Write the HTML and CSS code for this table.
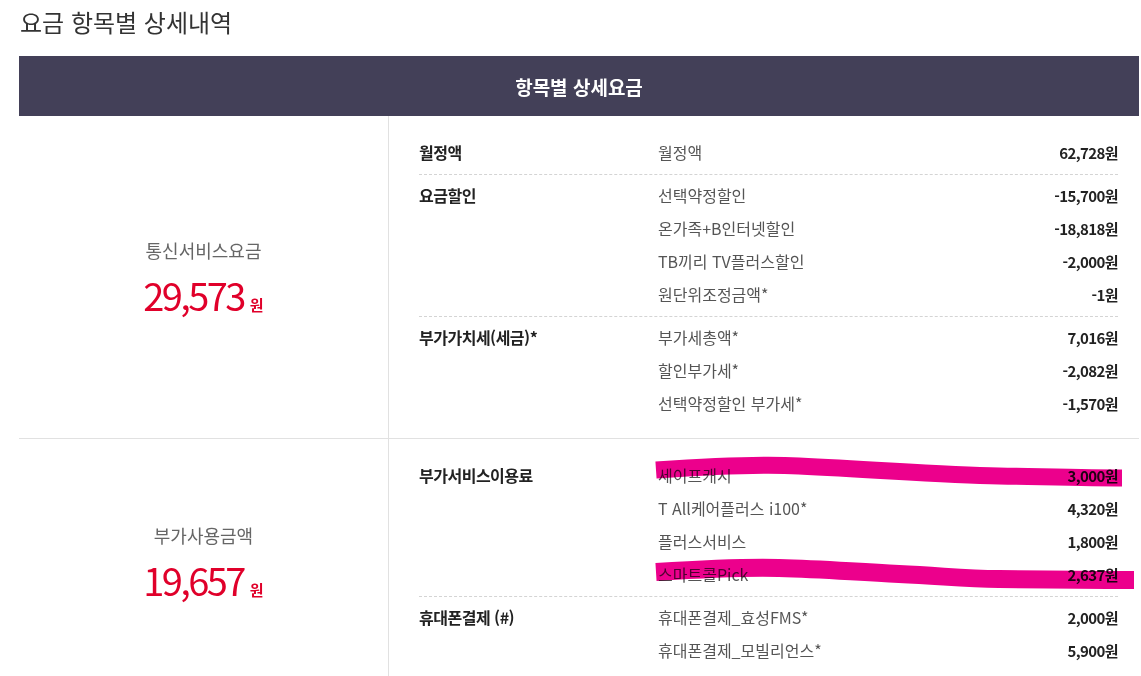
FILE: index.html
```html
<!DOCTYPE html>
<html lang="ko">
<head>
<meta charset="utf-8">
<title>요금 항목별 상세내역</title>
<link rel="stylesheet" href="styles.css">
</head>
<body>
<div class="page">
  <h2 class="title">요금 항목별 상세내역</h2>
  <div class="bill">
    <div class="bill-head">항목별 상세요금</div>

    <section class="sect">
      <div class="sum">
        <div class="sum-label">통신서비스요금</div>
        <div class="sum-value"><span class="num">29,573</span><span class="won">원</span></div>
      </div>
      <div class="detail">
        <div class="group">
          <div class="cat">월정액</div>
          <ul class="items">
            <li><span class="name">월정액</span><span class="amt">62,728원</span></li>
          </ul>
        </div>
        <div class="group">
          <div class="cat">요금할인</div>
          <ul class="items">
            <li><span class="name">선택약정할인</span><span class="amt">-15,700원</span></li>
            <li><span class="name">온가족+B인터넷할인</span><span class="amt">-18,818원</span></li>
            <li><span class="name">TB끼리 TV플러스할인</span><span class="amt">-2,000원</span></li>
            <li><span class="name">원단위조정금액*</span><span class="amt">-1원</span></li>
          </ul>
        </div>
        <div class="group">
          <div class="cat">부가가치세(세금)*</div>
          <ul class="items">
            <li><span class="name">부가세총액*</span><span class="amt">7,016원</span></li>
            <li><span class="name">할인부가세*</span><span class="amt">-2,082원</span></li>
            <li><span class="name">선택약정할인 부가세*</span><span class="amt">-1,570원</span></li>
          </ul>
        </div>
      </div>
    </section>

    <section class="sect">
      <div class="sum">
        <div class="sum-label">부가사용금액</div>
        <div class="sum-value"><span class="num">19,657</span><span class="won">원</span></div>
      </div>
      <div class="detail">
        <div class="group">
          <div class="cat">부가서비스이용료</div>
          <ul class="items">
            <li><span class="name">세이프캐시</span><span class="amt">3,000원</span>
              <svg class="mark mark-1" width="480" height="40" viewBox="0 0 480 40"><path d="M2,17 C60,13 110,11 145,13 C230,17 290,22 345,23 C400,24 440,25 468,25" /></svg>
            </li>
            <li><span class="name">T All케어플러스 i100*</span><span class="amt">4,320원</span></li>
            <li><span class="name">플러스서비스</span><span class="amt">1,800원</span></li>
            <li><span class="name">스마트콜Pick</span><span class="amt">2,637원</span>
              <svg class="mark mark-2" width="485" height="44" viewBox="0 0 485 44"><path d="M2,20 C50,17 90,15 125,16 C170,17 200,20 245,22 C290,24 310,27 345,27 C420,28 460,28 480,28" /></svg>
            </li>
          </ul>
        </div>
        <div class="group">
          <div class="cat">휴대폰결제 (#)</div>
          <ul class="items">
            <li><span class="name">휴대폰결제_효성FMS*</span><span class="amt">2,000원</span></li>
            <li><span class="name">휴대폰결제_모빌리언스*</span><span class="amt">5,900원</span></li>
          </ul>
        </div>
      </div>
    </section>
  </div>
</div>
</body>
</html>
```

FILE: styles.css
```css
html, body {
  margin: 0;
  padding: 0;
  overflow: hidden;
  background: #fff;
}

body {
  font-family: "Noto Sans CJK KR", "Noto Sans", sans-serif;
  color: #222;
}

.page {
  padding: 0 2px 0 19px;
}

.title {
  margin: 7px 0 19px 1px;
  font-size: 24px;
  line-height: 30px;
  font-weight: 400;
  color: #333;
}

.bill-head {
  height: 60px;
  background: #434058;
  color: #fff;
  font-size: 19px;
  font-weight: 700;
  display: flex;
  align-items: center;
  justify-content: center;
}

.sect {
  display: grid;
  grid-template-columns: 370px 1fr;
  border-bottom: 1px solid #e1e1e1;
}

.sum {
  border-right: 1px solid #e1e1e1;
  display: flex;
  flex-direction: column;
  align-items: center;
  justify-content: center;
}

.sum-label {
  font-size: 18px;
  line-height: 24px;
  color: #666;
}

.sum-value {
  margin-top: 11px;
  height: 44px;
  display: flex;
  align-items: baseline;
  gap: 6px;
  color: #e0002a;
}

.num {
  font-size: 38px;
  line-height: 44px;
  letter-spacing: -2.6px;
  font-weight: 400;
}

.won {
  font-size: 15px;
  font-weight: 700;
}

.detail {
  padding: 16px 21px 13px 30px;
}

.group {
  display: grid;
  grid-template-columns: 239px 1fr;
  padding: 4px 0 5px;
  border-bottom: 1px dashed #d4d4d4;
}

.group:last-child {
  border-bottom: none;
}

.cat {
  font-size: 16px;
  line-height: 33px;
  font-weight: 700;
  color: #222;
  letter-spacing: -0.5px;
}

.items {
  list-style: none;
  margin: 0;
  padding: 0;
}

.items li {
  position: relative;
  display: flex;
  justify-content: space-between;
  height: 33px;
  line-height: 33px;
  font-size: 16px;
}

.name {
  color: #555;
}

.amt {
  color: #222;
  font-size: 15px;
  font-weight: 700;
  letter-spacing: -0.6px;
}

.mark {
  position: absolute;
  left: -4px;
  top: -6px;
  overflow: visible;
  mix-blend-mode: multiply;
  pointer-events: none;
}

.mark path {
  fill: none;
  stroke: #ec008c;
  stroke-linecap: butt;
}

.mark-1 path {
  stroke-width: 17;
}

.mark-2 path {
  stroke-width: 18;
}
```
